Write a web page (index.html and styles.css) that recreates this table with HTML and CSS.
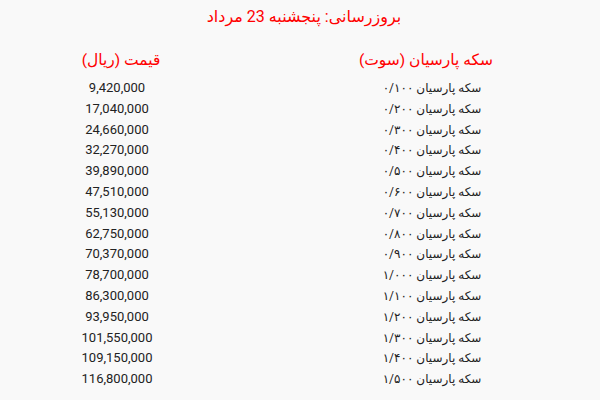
FILE: index.html
```html
<!DOCTYPE html>
<html lang="fa" dir="rtl">
<head>
<meta charset="utf-8">
<link rel="stylesheet" href="styles.css">
</head>
<body>
<div class="page">
  <div class="title">بروزرسانی: پنجشنبه 23 مرداد</div>
  <div class="table">
    <div class="head head-name">سکه پارسیان (سوت)</div>
    <div class="head head-price">قیمت (ریال)</div>
    <div class="cell">سکه پارسیان ۰/۱۰۰</div><div class="cell num">9,420,000</div>
    <div class="cell">سکه پارسیان ۰/۲۰۰</div><div class="cell num">17,040,000</div>
    <div class="cell">سکه پارسیان ۰/۳۰۰</div><div class="cell num">24,660,000</div>
    <div class="cell">سکه پارسیان ۰/۴۰۰</div><div class="cell num">32,270,000</div>
    <div class="cell">سکه پارسیان ۰/۵۰۰</div><div class="cell num">39,890,000</div>
    <div class="cell">سکه پارسیان ۰/۶۰۰</div><div class="cell num">47,510,000</div>
    <div class="cell">سکه پارسیان ۰/۷۰۰</div><div class="cell num">55,130,000</div>
    <div class="cell">سکه پارسیان ۰/۸۰۰</div><div class="cell num">62,750,000</div>
    <div class="cell">سکه پارسیان ۰/۹۰۰</div><div class="cell num">70,370,000</div>
    <div class="cell">سکه پارسیان ۱/۰۰۰</div><div class="cell num">78,700,000</div>
    <div class="cell">سکه پارسیان ۱/۱۰۰</div><div class="cell num">86,300,000</div>
    <div class="cell">سکه پارسیان ۱/۲۰۰</div><div class="cell num">93,950,000</div>
    <div class="cell">سکه پارسیان ۱/۳۰۰</div><div class="cell num">101,550,000</div>
    <div class="cell">سکه پارسیان ۱/۴۰۰</div><div class="cell num">109,150,000</div>
    <div class="cell">سکه پارسیان ۱/۵۰۰</div><div class="cell num">116,800,000</div>
  </div>
</div>
</body>
</html>
```
FILE: styles.css
```css
html, body {
  margin: 0;
  padding: 0;
  background: #f9f9f9;
}
.page {
  width: 600px;
  height: 400px;
  overflow: hidden;
  font-family: Roboto, "DejaVu Sans", sans-serif;
  color: #222;
}
.title {
  color: #ff0000;
  font-size: 16px;
  text-align: center;
  line-height: 20px;
  padding-top: 7px;
  padding-left: 8px;
}
.table {
  display: grid;
  grid-template-columns: 200px 200px;
  column-gap: 115px;
  margin-right: 68px;
  margin-top: 22px;
}
.head {
  color: #ff0000;
  font-size: 15.5px;
  text-align: center;
  line-height: 22px;
  padding-bottom: 7px;
}
.head-name {
  padding-right: 12px;
}
.head-price {
  padding-left: 8px;
}
.cell {
  font-size: 12px;
  text-align: center;
  line-height: 20.8px;
}
.num {
  font-size: 13px;
}
```
